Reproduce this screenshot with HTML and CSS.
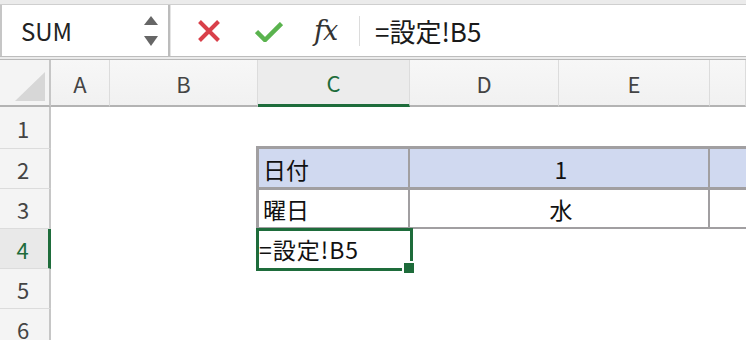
FILE: index.html
```html
<!DOCTYPE html>
<html lang="ja">
<head>
    <meta charset="UTF-8">
    <title>Sheet</title>
    <link rel="stylesheet" href="styles.css">
</head>
<body>
    <div class="toolbar">
        <div class="formula-row">
            <!-- Name box -->
            <div class="namebox">
                <span class="name">SUM</span>
                <svg class="spin" viewBox="0 0 14 30" width="14" height="30">
                    <polygon points="7,0 14,9 0,9" />
                    <polygon points="0,20 14,20 7,30" />
                </svg>
            </div>

            <!-- Cancel / enter / function + formula text -->
            <div class="fbar">
                <svg class="icon cancel" viewBox="0 0 22 22" width="22" height="22">
                    <path d="M1.5 1.5 L20.5 20.5 M20.5 1.5 L1.5 20.5" />
                </svg>
                <svg class="icon enter" viewBox="0 0 28 20" width="28" height="20">
                    <path d="M1.5 9.5 L10 18 L26.5 1.5" />
                </svg>
                <span class="fx">fx</span>
                <span class="sep"></span>
                <span class="formula">=設定!B5</span>
            </div>
        </div>
    </div>

    <div class="sheet">
        <!-- column headers -->
        <div class="corner">
            <svg viewBox="0 0 30 29" width="30" height="29"><polygon points="30,0 30,29 0,29" /></svg>
        </div>
        <div class="colhdr">A</div>
        <div class="colhdr">B</div>
        <div class="colhdr active">C</div>
        <div class="colhdr">D</div>
        <div class="colhdr">E</div>
        <div class="colhdr"></div>

        <!-- row 1 -->
        <div class="rowhdr">1</div>
        <div></div><div></div><div></div><div></div><div></div><div></div>

        <!-- row 2 -->
        <div class="rowhdr">2</div>
        <div></div><div></div>
        <div class="cell tb r2 cc">日付</div>
        <div class="cell tb r2 cde">1</div>
        <div class="cell tb r2"></div>

        <!-- row 3 -->
        <div class="rowhdr">3</div>
        <div></div><div></div>
        <div class="cell tb r3 cc">曜日</div>
        <div class="cell tb r3 cde">水</div>
        <div class="cell tb r3"></div>

        <!-- row 4 -->
        <div class="rowhdr active">4</div>
        <div></div><div></div>
        <div class="cell sel">=設定!B5<span class="handle"></span></div>
        <div></div><div></div><div></div>

        <!-- row 5 -->
        <div class="rowhdr">5</div>
        <div></div><div></div><div></div><div></div><div></div><div></div>

        <!-- row 6 -->
        <div class="rowhdr">6</div>
        <div></div><div></div><div></div><div></div><div></div><div></div>
    </div>
</body>
</html>
```

FILE: styles.css
```css
body {
    margin: 0;
    width: 746px;
    height: 340px;
    overflow: hidden;
    background: #fff;
    font-family: "Noto Sans CJK JP", "Noto Sans", sans-serif;
}

/* Formula bar */
.toolbar {
    background: #ebebeb;
    padding: 4px 0 2px;
}

.formula-row {
    display: flex;
    height: 51px;
    background: #fff;
    border-top: 1px solid #cfcfcf;
    border-bottom: 1px solid #bdbdbd;
}

.namebox {
    width: 166px;
    display: flex;
    align-items: center;
    border-left: 2px solid #c6c6c6;
    border-right: 2px solid #bcbcbc;
}

.name {
    margin-left: 19px;
    font-size: 24px;
    color: #222;
}

.spin {
    margin-left: auto;
    margin-right: 10px;
    fill: #666;
}

.fbar {
    flex: 1;
    display: flex;
    align-items: center;
    border-left: 1px solid #e4e4e4;
}

.icon {
    fill: none;
}

.cancel {
    margin-left: 27px;
    stroke: #d9404a;
    stroke-width: 4;
}

.enter {
    margin-left: 35px;
    margin-top: 2px;
    stroke: #5ab34e;
    stroke-width: 4.5;
}

.fx {
    width: 30px;
    margin-left: 31px;
    font-family: "DejaVu Serif", serif;
    font-style: italic;
    font-size: 27px;
    line-height: 1;
    color: #333;
    letter-spacing: -1px;
}

.sep {
    width: 1px;
    height: 30px;
    background: #dcdcdc;
    margin-left: 15px;
}

.formula {
    margin-left: 15px;
    font-size: 26px;
    color: #1a1a1a;
}

/* Grid */
.sheet {
    display: grid;
    grid-template-columns: 51px 59px 148px 152px 149px 151px 1fr;
    grid-template-rows: 47px 42px repeat(5, 40px);
    border-top: 1px solid #b8b8b8;
}

.corner {
    display: flex;
    justify-content: flex-end;
    align-items: flex-end;
    padding: 0 4px 4px 0;
    background: #f4f4f4;
    border-right: 2px solid #c6c6c6;
    border-bottom: 2px solid #b3b3b3;
    fill: #d7d7d7;
}

.colhdr {
    display: flex;
    justify-content: center;
    align-items: center;
    background: linear-gradient(#f7f7f7, #f1f1f1);
    border-right: 1px solid #dcdcdc;
    border-bottom: 2px solid #b3b3b3;
    font-size: 22px;
    color: #444;
}

.colhdr.active {
    background: #ececec;
    color: #1e6c3b;
    border-bottom: 3px solid #1e6c3b;
}

.rowhdr {
    display: flex;
    justify-content: center;
    align-items: center;
    padding-right: 3px;
    background: #f4f4f4;
    border-right: 2px solid #c6c6c6;
    border-bottom: 1px solid #dcdcdc;
    font-size: 22px;
    color: #444;
}

.rowhdr.active {
    background: #e9e9e9;
    color: #1e6c3b;
    border-right: 3px solid #1e6c3b;
}

/* Cells */
.cell {
    display: flex;
    align-items: center;
    padding-left: 4px;
    font-size: 23px;
    color: #111;
    white-space: nowrap;
}

.tb {
    border: 0 solid #a19fa1;
}

.r2 {
    margin-top: -3px;
    border-top-width: 3px;
    background: #d0d9f0;
}

.r3 {
    margin-top: -2px;
    border-top-width: 3px;
    border-bottom-width: 2px;
}

.cc {
    margin-left: -2px;
    border-left-width: 3px;
    border-right-width: 2px;
}

.cde {
    grid-column: span 2;
    justify-content: center;
    border-right-width: 2px;
}

.sel {
    position: relative;
    padding-left: 1px;
    letter-spacing: 1px;
}

.sel::before {
    content: "";
    position: absolute;
    left: -2px;
    top: -1px;
    right: -3px;
    bottom: -2px;
    border: 3px solid #1e6c3b;
}

.handle {
    position: absolute;
    right: -4px;
    bottom: -4px;
    width: 10px;
    height: 10px;
    background: #1e6c3b;
    box-shadow: 0 0 0 2px #fff;
}
```
